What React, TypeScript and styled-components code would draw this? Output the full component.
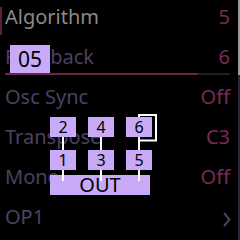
import React from 'react';
import styled, { createGlobalStyle } from 'styled-components';

const GlobalStyle = createGlobalStyle`
  html, body {
    margin: 0;
    padding: 0;
    background: #000;
  }
  * {
    box-sizing: border-box;
  }
`;

const Screen = styled.div`
  position: relative;
  display: flex;
  width: 240px;
  height: 240px;
  overflow: hidden;
  background: #000;
  font-family: "Noto Sans", sans-serif;
`;

const List = styled.div`
  flex: 1;
  display: flex;
  flex-direction: column;
`;

const Row = styled.div<{ $selected?: boolean }>`
  position: relative;
  height: 40px;
  padding: 7px 8px 0 5px;
  display: flex;
  flex-direction: column;

  &::before {
    content: '';
    display: ${(p) => (p.$selected ? 'block' : 'none')};
    position: absolute;
    left: 0;
    top: 7px;
    width: 2px;
    height: 28px;
    background: #5c1e40;
  }
`;

const Line = styled.div`
  display: flex;
  justify-content: space-between;
  align-items: center;
  font-size: 20px;
  line-height: 20px;
`;

const Label = styled.span<{ $selected?: boolean }>`
  color: ${(p) => (p.$selected ? '#8a8a8a' : '#4b4160')};
`;

const Value = styled.span`
  color: #7a2b55;
`;

const Chevron = styled.svg`
  width: 8px;
  height: 15px;
  margin-right: -1px;
  margin-top: 4px;
`;

const Track = styled.div`
  margin-top: 6px;
  height: 2px;
  background: #1e1c24;
`;

const Fill = styled.div`
  height: 100%;
  background: #6a2548;
`;

const Badge = styled.div`
  position: absolute;
  left: 10px;
  top: 5px;
  width: 40px;
  height: 28px;
  background: #c8aaf8;
  color: #000;
  font-size: 21px;
  line-height: 28px;
  text-align: center;
`;

const ScrollTrack = styled.div`
  width: 2px;
  margin-right: 0;
  background: #2c2a3a;
  display: flex;
  flex-direction: column;
`;

const Thumb = styled.div`
  height: 75px;
  background: #9a9a9a;
`;

const Diagram = styled.div`
  position: absolute;
  left: 50px;
  top: 113px;
  width: 108px;
  height: 82px;
`;

const Ops = styled.div`
  position: absolute;
  left: 0;
  top: 4px;
  display: grid;
  grid-template-columns: repeat(3, 26px);
  grid-auto-rows: 20px;
  column-gap: 12px;
  row-gap: 13px;
`;

const Op = styled.div`
  background: #c8aaf8;
  color: #000;
  font-size: 16px;
  line-height: 20px;
  text-align: center;
`;

const Out = styled.div`
  position: absolute;
  left: 0;
  top: 62px;
  width: 100px;
  height: 20px;
  background: #c8aaf8;
  color: #000;
  font-size: 20px;
  line-height: 20px;
  text-align: center;
`;

const Wires = styled.svg`
  position: absolute;
  left: 0;
  top: 0;
`;

const rows = [
  { label: 'Algorithm', value: '5', selected: true },
  { label: 'Feedback', value: '6', slider: 6 / 7 },
  { label: 'Osc Sync', value: 'Off' },
  { label: 'Transpose', value: 'C3' },
  { label: 'Mono', value: 'Off' },
  { label: 'OP1', chevron: true },
];

export default function App() {
  return (
    <>
      <GlobalStyle />
      <Screen>
        <List>
          {rows.map((r) => (
            <Row key={r.label} $selected={r.selected}>
              <Line>
                <Label $selected={r.selected}>{r.label}</Label>
                {r.chevron ? (
                  <Chevron viewBox="0 0 8 15">
                    <polyline points="1,1 6.5,7.5 1,14" fill="none" stroke="#4b4160" strokeWidth="2" />
                  </Chevron>
                ) : (
                  <Value>{r.value}</Value>
                )}
              </Line>
              {r.slider !== undefined && (
                <>
                  <Track>
                    <Fill style={{ width: `${r.slider * 100}%` }} />
                  </Track>
                  <Badge>05</Badge>
                </>
              )}
            </Row>
          ))}
        </List>
        <ScrollTrack>
          <Thumb />
        </ScrollTrack>
        <Diagram>
          <Out>OUT</Out>
          <Wires width="108" height="82" viewBox="0 0 108 82">
            <g stroke="#fff" strokeWidth="2" fill="none">
              <line x1="13" y1="4" x2="13" y2="68" />
              <line x1="51" y1="4" x2="51" y2="68" />
              <line x1="89" y1="2" x2="89" y2="68" />
              <polyline points="88,2 106,2 106,27.5 89,27.5" />
            </g>
          </Wires>
          <Ops>
            <Op>2</Op>
            <Op>4</Op>
            <Op>6</Op>
            <Op>1</Op>
            <Op>3</Op>
            <Op>5</Op>
          </Ops>
        </Diagram>
      </Screen>
    </>
  );
}
